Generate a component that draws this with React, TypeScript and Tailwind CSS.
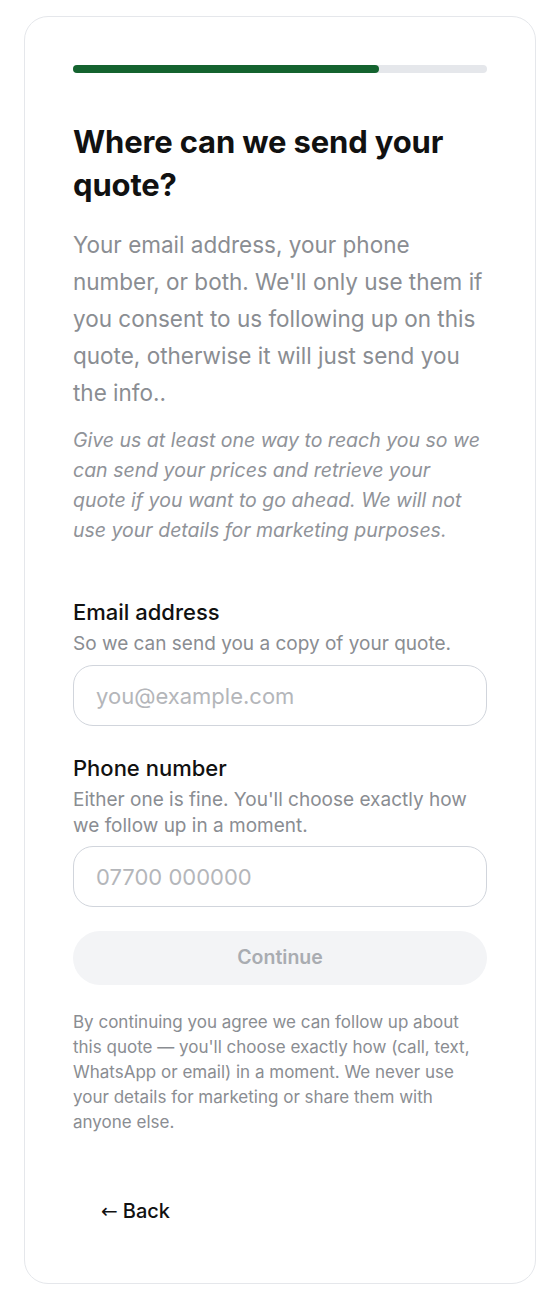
const App = () => {
  return (
    <div className="min-h-screen bg-white px-6 pt-4 pb-4" style={{ fontFamily: 'Inter, "Noto Sans", sans-serif' }}>
      <div className="h-[1268px] rounded-3xl border border-gray-200 bg-white px-12 pt-12">
        {/* progress */}
        <div className="h-2 w-full rounded-full bg-gray-200">
          <div className="h-2 w-[74%] rounded-full bg-[#14632f]" />
        </div>

        <h1 className="mt-[47px] text-[31px] font-bold leading-[43px] tracking-[-0.005em] text-[#111]">
          Where can we send your quote?
        </h1>
        <p className="mt-[20px] text-[22.5px] leading-[37px] text-[#8a8d92]">
          Your email address, your phone number, or both. We'll only use them if you consent to us following up on this quote, otherwise it will just send you the info..
        </p>
        <p className="mt-[14px] text-[19.5px] italic leading-[30px] text-[#909399]">
          Give us at least one way to reach you so we can send your prices and retrieve your quote if you want to go ahead. We will not use your details for marketing purposes.
        </p>

        <div className="mt-[51px]">
          <label className="block text-[22px] font-medium leading-[32px] text-[#111]">Email address</label>
          <p className="mt-[3px] text-[19px] leading-[26px] text-[#8a8d92]">So we can send you a copy of your quote.</p>
          <input
            type="email"
            placeholder="you@example.com"
            className="mt-[8px] h-[61px] w-full rounded-[20px] border border-gray-300 px-[22px] text-[22px] text-gray-800 outline-none placeholder:text-[#b4b6ba]"
          />
        </div>

        <div className="mt-[26px]">
          <label className="block text-[22px] font-medium leading-[32px] text-[#111]">Phone number</label>
          <p className="mt-[3px] text-[19px] leading-[26px] text-[#8a8d92]">
            Either one is fine. You'll choose exactly how we follow up in a moment.
          </p>
          <input
            type="tel"
            placeholder="07700 000000"
            className="mt-[7px] h-[61px] w-full rounded-[20px] border border-gray-300 px-[22px] text-[22px] text-gray-800 outline-none placeholder:text-[#b4b6ba]"
          />
        </div>

        <button
          disabled
          className="mt-[24px] h-[54px] w-full rounded-full bg-[#f3f4f6] text-[19.5px] font-semibold text-[#a9acb1]"
        >
          Continue
        </button>

        <p className="mt-[25px] text-[17px] leading-[25px] text-[#8a8d92]">
          By continuing you agree we can follow up about this quote — you'll choose exactly how (call, text, WhatsApp or email) in a moment. We never use your details for marketing or share them with anyone else.
        </p>

        <button className="mt-[62px] ml-7 flex items-center gap-[5px] text-[20px] font-medium leading-[28px] text-[#111]">
          <span className="font-normal" style={{ fontFamily: '"DejaVu Sans", sans-serif' }}>←</span>
          <span>Back</span>
        </button>
      </div>
    </div>
  );
};

export default App;
